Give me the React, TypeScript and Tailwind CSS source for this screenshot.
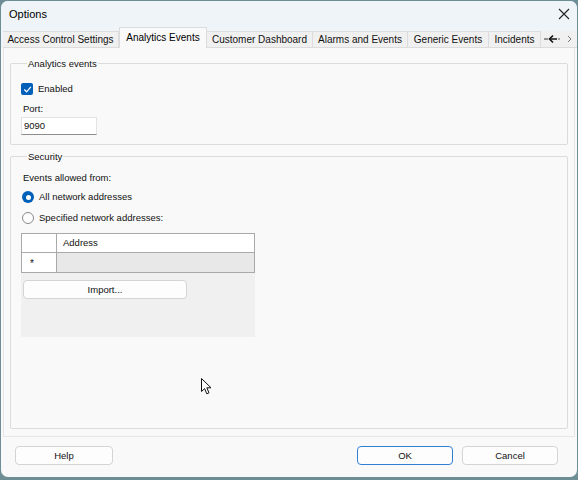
import React from 'react';

const tabs = [
  { label: 'Access Control Settings', w: 'w-[116px]' },
  { label: 'Analytics Events', w: 'w-[88px]', active: true },
  { label: 'Customer Dashboard', w: 'w-[106px]' },
  { label: 'Alarms and Events', w: 'w-[95px]' },
  { label: 'Generic Events', w: 'w-[81px]' },
  { label: 'Incidents', w: 'w-[52px]' },
];

const Checkbox: React.FC = () => (
  <span className="flex h-[12px] w-[12px] items-center justify-center rounded-[2px] bg-[#005fb8]">
    <svg width="9" height="9" viewBox="0 0 9 9" fill="none">
      <path d="M1.5 4.8 L3.6 6.8 L7.6 2.2" stroke="white" strokeWidth="1.2" strokeLinecap="round" strokeLinejoin="round" />
    </svg>
  </span>
);

const Radio: React.FC<{ checked?: boolean }> = ({ checked }) =>
  checked ? (
    <span className="flex h-[12px] w-[12px] items-center justify-center rounded-full bg-[#005fb8]">
      <span className="h-[5px] w-[5px] rounded-full bg-white" />
    </span>
  ) : (
    <span className="h-[12px] w-[12px] rounded-full border border-[#8a8a8a] bg-[#fdfdfd]" />
  );

const Button: React.FC<{ label: string; w: string; primary?: boolean }> = ({ label, w, primary }) => (
  <button
    type="button"
    className={`${w} h-[19px] rounded-[4px] border bg-[#fdfdfd] text-[9.5px] leading-none text-[#111] ${
      primary ? 'border-[#2f7fd3]' : 'border-[#d4d4d4]'
    }`}
  >
    {label}
  </button>
);

export default function App() {
  return (
    <div className="relative h-[480px] w-[578px] bg-[#6e8e95] pt-[1px] pl-[1px] font-['Liberation_Sans',Arial,sans-serif] text-[9.5px] leading-[14px] text-[#111]">
      <div className="flex h-[476px] w-[576px] flex-col overflow-hidden rounded-[7px] bg-[#f9f9f9]">
        {/* title bar */}
        <div className="flex h-[26px] items-center justify-between bg-[#eef4f7] pl-[8px] pr-[8px]">
          <span className="text-[11px] text-black">Options</span>
          <svg width="12" height="12" viewBox="0 0 12 12" className="mr-[-1px] mt-[-1px]">
            <path d="M1 1 L11 11 M11 1 L1 11" stroke="#222" strokeWidth="1.1" />
          </svg>
        </div>

        {/* tab strip */}
        <div className="flex h-[21px] items-end bg-[#eef4f7] pl-[2px] text-[10px] whitespace-nowrap">
          {tabs.map((t) =>
            t.active ? (
              <div
                key={t.label}
                className={`${t.w} flex h-[21px] items-start justify-center border-x border-t border-[#dcdcdc] bg-[#f9f9f9] pt-[3px] text-black`}
              >
                {t.label}
              </div>
            ) : (
              <div
                key={t.label}
                className={`${t.w} flex h-[17px] items-center justify-center border-r border-t border-b border-[#dcdcdc] bg-[#f0f0f0]`}
              >
                {t.label}
              </div>
            )
          )}
          <div className="flex h-[17px] flex-1 items-center border-b border-[#dcdcdc] bg-[#f0f0f0] pl-[3px]">
            <svg width="32" height="12" viewBox="0 0 32 12">
              <path d="M0 6 H4" stroke="#333" strokeWidth="1" />
              <path d="M9 2.5 L5.5 6 L9 9.5" stroke="#111" strokeWidth="1.6" fill="none" />
              <path d="M6 6 H13" stroke="#111" strokeWidth="1.4" />
              <path d="M14 6 H16" stroke="#555" strokeWidth="1" />
              <path d="M24 3 L27 6 L24 9" stroke="#777" strokeWidth="1" fill="none" />
            </svg>
          </div>
        </div>

        {/* tab panel */}
        <div className="mx-[2px] flex h-[389px] flex-col gap-[4px] border-x border-b border-[#e6e6e6] bg-[#f9f9f9] px-[6px] pt-[8px]">
          <fieldset className="h-[89px] rounded-[2px] border border-[#dcdcdc] px-[10px]">
            <legend className="ml-[6px] px-[1px]">
              <span className="relative top-[1px]">Analytics events</span>
            </legend>
            <label className="mt-[13px] flex h-[12px] items-center gap-[5px]">
              <Checkbox />
              <span>Enabled</span>
            </label>
            <div className="mt-[7px] pl-[2px]">Port:</div>
            <div className="mt-[1px] flex h-[18px] w-[76px] items-center border border-[#e3e3e3] border-b-[#8d8d8d] bg-white px-[2px]">
              9090
            </div>
          </fieldset>

          <fieldset className="h-[280px] rounded-[2px] border border-[#dcdcdc] px-[10px]">
            <legend className="ml-[6px] px-[1px]">
              <span className="relative top-[1px]">Security</span>
            </legend>
            <div className="mt-[8px] pl-[2px]">Events allowed from:</div>
            <div className="mt-[5px] flex flex-col gap-[7px] pl-[1px]">
              <label className="flex h-[14px] items-center gap-[5px]">
                <Radio checked />
                <span>All network addresses</span>
              </label>
              <label className="flex h-[14px] items-center gap-[5px]">
                <Radio />
                <span>Specified network addresses:</span>
              </label>
            </div>

            <div className="mt-[8px] flex h-[104px] w-[234px] flex-col bg-[#f0f0f0]">
              <div className="flex h-[20px] border border-[#a9a9a9] bg-white">
                <div className="w-[35px] border-r border-[#a9a9a9]" />
                <div className="flex flex-1 items-center pl-[6px]">Address</div>
              </div>
              <div className="flex h-[20px] border-x border-b border-[#a9a9a9]">
                <div className="flex w-[35px] items-center justify-center border-r border-[#a9a9a9] bg-white pt-[2px] pr-[14px] text-[10px] leading-none">
                  *
                </div>
                <div className="flex-1 bg-[#e8e8e8]" />
              </div>
              <div className="mt-[7px] pl-[2px]">
                <Button label="Import..." w="w-[164px]" />
              </div>
            </div>
          </fieldset>
        </div>

        {/* footer */}
        <div className="flex flex-1 items-start pl-[14px] pr-[19px] pt-[9px]">
          <Button label="Help" w="w-[98px]" />
          <div className="flex-1" />
          <div className="flex gap-[9px]">
            <Button label="OK" w="w-[96px]" primary />
            <Button label="Cancel" w="w-[96px]" />
          </div>
        </div>
      </div>

      {/* mouse pointer */}
      <svg className="absolute left-[201px] top-[378px]" width="12" height="18" viewBox="0 0 12 18">
        <path d="M0.5 0.5 L0.5 13.5 L3.6 10.6 L5.8 15.8 L8 14.8 L5.8 9.8 L10 9.8 Z" fill="white" stroke="#111" strokeWidth="1" strokeLinejoin="round" />
      </svg>
    </div>
  );
}
